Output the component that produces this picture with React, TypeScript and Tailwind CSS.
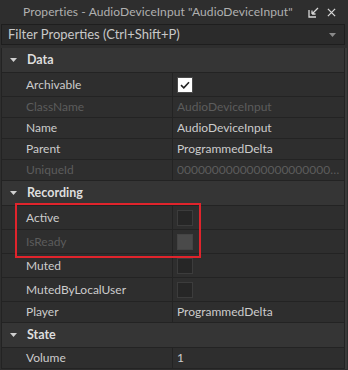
import React from "react";

type Row =
  | { kind: "header"; label: string }
  | { kind: "text"; label: string; value: string; disabled?: boolean }
  | { kind: "check"; label: string; checked?: boolean; disabled?: boolean };

const rows: Row[] = [
  { kind: "header", label: "Data" },
  { kind: "check", label: "Archivable", checked: true },
  { kind: "text", label: "ClassName", value: "AudioDeviceInput", disabled: true },
  { kind: "text", label: "Name", value: "AudioDeviceInput" },
  { kind: "text", label: "Parent", value: "ProgrammedDelta" },
  { kind: "text", label: "UniqueId", value: "000000000000000000000000000000", disabled: true },
  { kind: "header", label: "Recording" },
  { kind: "check", label: "Active" },
  { kind: "check", label: "IsReady", disabled: true },
  { kind: "check", label: "Muted" },
  { kind: "check", label: "MutedByLocalUser" },
  { kind: "text", label: "Player", value: "ProgrammedDelta" },
  { kind: "header", label: "State" },
  { kind: "text", label: "Volume", value: "1" },
];

function Checkbox({ checked, disabled }: { checked?: boolean; disabled?: boolean }) {
  if (checked) {
    return (
      <div className="w-[16px] h-[16px] bg-white border border-[#4a4a4a] flex items-center justify-center">
        <svg width="10" height="8" viewBox="0 0 10 8">
          <path d="M1 4.2 L3.8 6.8 L9 1.2" stroke="#222" strokeWidth="1.6" fill="none" />
        </svg>
      </div>
    );
  }
  if (disabled) {
    return <div className="w-[16px] h-[16px] bg-[#4a4a4a] border border-[#444]" />;
  }
  return <div className="w-[16px] h-[16px] bg-[#262626] border border-[#3c3c3c]" />;
}

function PropertyRow({ row }: { row: Row }) {
  if (row.kind === "header") {
    return (
      <div className="h-[25px] flex items-center bg-[#353535] border-b border-[#232323]">
        <svg width="25" height="10" viewBox="0 0 25 10" className="shrink-0">
          <path d="M8 3 L15 3 L11.5 7 Z" fill="#d0d0d0" />
        </svg>
        <span className="font-bold text-[#dedede] text-[12.5px]">{row.label}</span>
      </div>
    );
  }
  const tall = row.kind === "check";
  const nameColor = row.disabled ? "text-[#5c5c5c]" : "text-[#cccccc]";
  return (
    <div className={`${tall ? "h-[24px]" : "h-[21px]"} flex border-b border-[#232323]`}>
      <div className={`w-[171px] shrink-0 pl-[24px] flex items-center border-r border-[#232323] whitespace-nowrap ${nameColor}`}>
        {row.label}
      </div>
      <div className="flex-1 min-w-0 pl-[4px] flex items-center">
        {row.kind === "check" ? (
          <Checkbox checked={row.checked} disabled={row.disabled} />
        ) : (
          <span className={`truncate pr-[4px] ${row.disabled ? "text-[#5c5c5c]" : "text-[#cccccc]"}`}>
            {row.value}
          </span>
        )}
      </div>
    </div>
  );
}

export default function App() {
  return (
    <div
      className="w-[348px] h-[370px] overflow-hidden bg-[#2e2e2e] text-[12px] relative"
      style={{ fontFamily: "Lato, 'Noto Sans', sans-serif" }}
    >
      {/* title bar */}
      <div className="h-[24px] flex items-center pl-[23px] pr-[12px]">
        <span className="text-[#b0b0b0] text-[12px] tracking-[0.1px] flex-1 whitespace-nowrap">
          Properties - AudioDeviceInput "AudioDeviceInput"
        </span>
        <svg width="12" height="12" viewBox="0 0 12 12" className="mr-[7px]">
          <path d="M1 4 V11 H8" stroke="#d8d8d8" strokeWidth="1.3" fill="none" />
          <path d="M4 8 L10 2 M4 8 V4.5 M4 8 H7.5" stroke="#d8d8d8" strokeWidth="1.3" fill="none" />
        </svg>
        <svg width="9" height="9" viewBox="0 0 10 10">
          <path d="M1 1 L9 9 M9 1 L1 9" stroke="#d8d8d8" strokeWidth="1.4" />
        </svg>
      </div>

      {/* filter box */}
      <div className="ml-[1px] mr-[3px] h-[21px] flex items-center border border-[#1e1e1e] bg-[#2b2b2b] pl-[6px] pr-[8px]">
        <span className="flex-1 text-[#c8c8c8] text-[13px] whitespace-nowrap">Filter Properties (Ctrl+Shift+P)</span>
        <svg width="7" height="4" viewBox="0 0 7 4">
          <path d="M0 0 H7 L3.5 4 Z" fill="#8a8a8a" />
        </svg>
      </div>

      {/* property grid */}
      <div className="mt-[3px] flex">
        <div className="w-[344px] ml-[1px] border-l border-r border-[#232323]">
          {rows.map((row) => (
            <PropertyRow key={row.label} row={row} />
          ))}
        </div>
        <div className="w-[2px] bg-[#3a3a3a]" />
      </div>

      {/* highlight box */}
      <div className="absolute left-[15px] top-[203px] w-[186px] h-[55px] border-2 border-[#e0242c]" />
    </div>
  );
}
